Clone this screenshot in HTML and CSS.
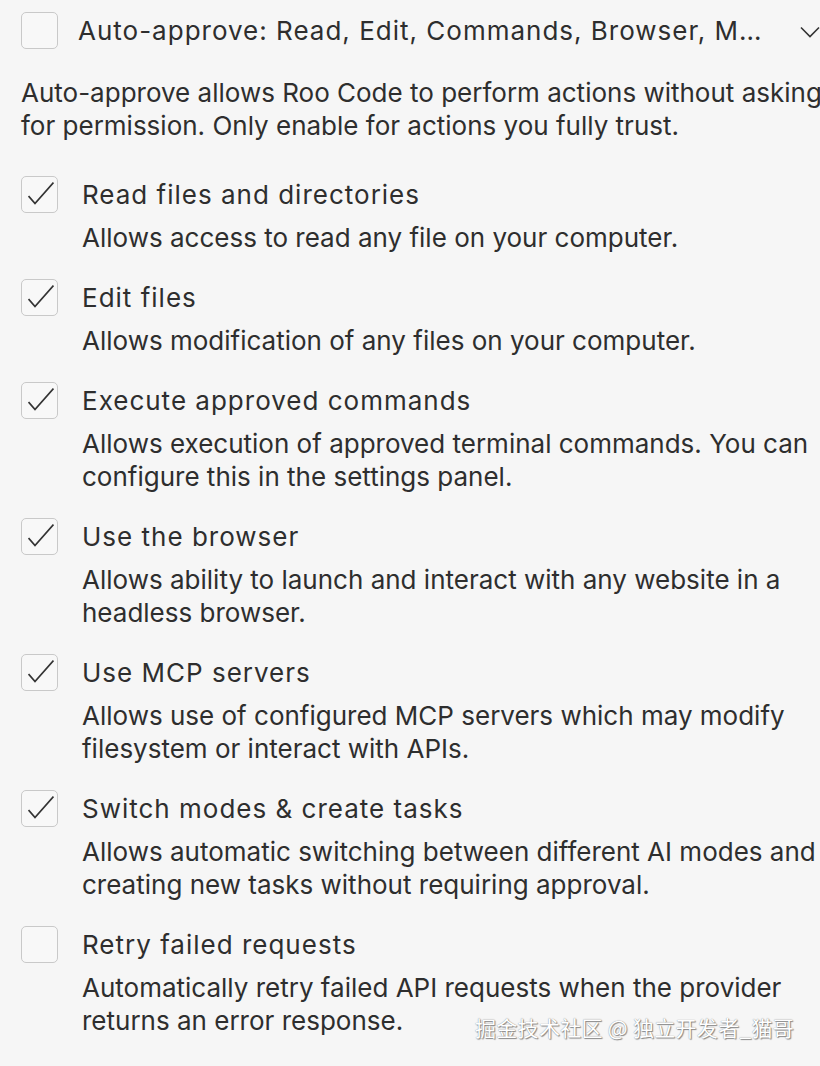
FILE: index.html
```html
<!DOCTYPE html>
<html lang="en">
<head>
    <meta charset="UTF-8">
    <meta name="viewport" content="width=device-width, initial-scale=1.0">
    <title>Auto-approve</title>
    <link rel="stylesheet" href="styles.css">
</head>
<body>

<div class="panel">
    <!-- Collapsed header -->
    <div class="approve-header">
        <span class="checkbox"></span>
        <span class="header-text">Auto-approve: Read, Edit, Commands, Browser, MCP, Modes, Retry</span>
        <svg class="chevron" width="20" height="12" viewBox="0 0 20 12">
            <polyline points="1,1.5 10,10.5 19,1.5" fill="none" stroke="#333" stroke-width="1.6"/>
        </svg>
    </div>

    <p class="intro">Auto-approve allows Roo Code to perform actions without asking for permission. Only enable for actions you fully trust.</p>

    <div class="options">
        <div class="option">
            <span class="checkbox checked"></span>
            <div class="option-text">
                <div class="option-title">Read files and directories</div>
                <div class="option-desc">Allows access to read any file on your computer.</div>
            </div>
        </div>

        <div class="option">
            <span class="checkbox checked"></span>
            <div class="option-text">
                <div class="option-title">Edit files</div>
                <div class="option-desc">Allows modification of any files on your computer.</div>
            </div>
        </div>

        <div class="option">
            <span class="checkbox checked"></span>
            <div class="option-text">
                <div class="option-title">Execute approved commands</div>
                <div class="option-desc">Allows execution of approved terminal commands. You can configure this in the settings panel.</div>
            </div>
        </div>

        <div class="option">
            <span class="checkbox checked"></span>
            <div class="option-text">
                <div class="option-title">Use the browser</div>
                <div class="option-desc">Allows ability to launch and interact with any website in a headless browser.</div>
            </div>
        </div>

        <div class="option">
            <span class="checkbox checked"></span>
            <div class="option-text">
                <div class="option-title">Use MCP servers</div>
                <div class="option-desc">Allows use of configured MCP servers which may modify filesystem or interact with APIs.</div>
            </div>
        </div>

        <div class="option">
            <span class="checkbox checked"></span>
            <div class="option-text">
                <div class="option-title">Switch modes &amp; create tasks</div>
                <div class="option-desc">Allows automatic switching between different AI modes and creating new tasks without requiring approval.</div>
            </div>
        </div>

        <div class="option">
            <span class="checkbox"></span>
            <div class="option-text">
                <div class="option-title">Retry failed requests</div>
                <div class="option-desc">Automatically retry failed API requests when the provider returns an error response.</div>
            </div>
        </div>
    </div>
</div>

<div class="watermark">掘金技术社区 @ 独立开发者_猫哥</div>

</body>
</html>
```

FILE: styles.css
```css
* {
    margin: 0;
    padding: 0;
    box-sizing: border-box;
}

html, body {
    overflow: hidden;
}

body {
    font-family: Inter, "Noto Sans", sans-serif;
    background-color: #f6f6f6;
    color: #2e2e2e;
    height: 1066px;
    position: relative;
}

.panel {
    width: 840px;
    padding: 12px 0 0 21px;
}

.checkbox {
    flex: none;
    width: 37px;
    height: 37px;
    border: 1.5px solid #c9c9c9;
    border-radius: 5px;
    background-color: #f8f8f8;
    position: relative;
}

.checkbox.checked::after {
    content: "";
    position: absolute;
    left: 6px;
    top: 4px;
    width: 26px;
    height: 26px;
    background: url("data:image/svg+xml,%3Csvg xmlns='http://www.w3.org/2000/svg' viewBox='0 0 26 26'%3E%3Cpolyline points='0.5,15 7,22.5 25.5,1.5' fill='none' stroke='%23333' stroke-width='1.8'/%3E%3C/svg%3E") no-repeat;
}

.approve-header {
    display: flex;
    align-items: center;
    height: 37px;
    width: 799px;
}

.header-text {
    flex: 1;
    min-width: 0;
    margin-left: 20px;
    margin-right: 36px;
    font-size: 26px;
    letter-spacing: 1px;
    white-space: nowrap;
    overflow: hidden;
    text-overflow: ellipsis;
}

.chevron {
    flex: none;
    margin-top: 2px;
}

.intro {
    margin-top: 27px;
    font-size: 26px;
    line-height: 33px;
    width: 815px;
}

.options {
    margin-top: 36px;
    display: flex;
    flex-direction: column;
    gap: 27px;
}

.option {
    display: flex;
    align-items: flex-start;
}

.option .checkbox {
    margin-top: -2px;
}

.option-text {
    margin-left: 24px;
    width: 750px;
}

.option-title {
    font-size: 26px;
    line-height: 33px;
    letter-spacing: 1px;
    margin-bottom: 10px;
}

.option-desc {
    font-size: 26px;
    line-height: 33px;
}

.watermark {
    position: absolute;
    left: 475px;
    top: 1012px;
    font-family: "Noto Sans CJK SC", sans-serif;
    font-size: 21px;
    line-height: 30px;
    letter-spacing: 0.3px;
    color: #fff;
    text-shadow: 0 0 1px #777, 1px 1px 1px #888;
}
```
